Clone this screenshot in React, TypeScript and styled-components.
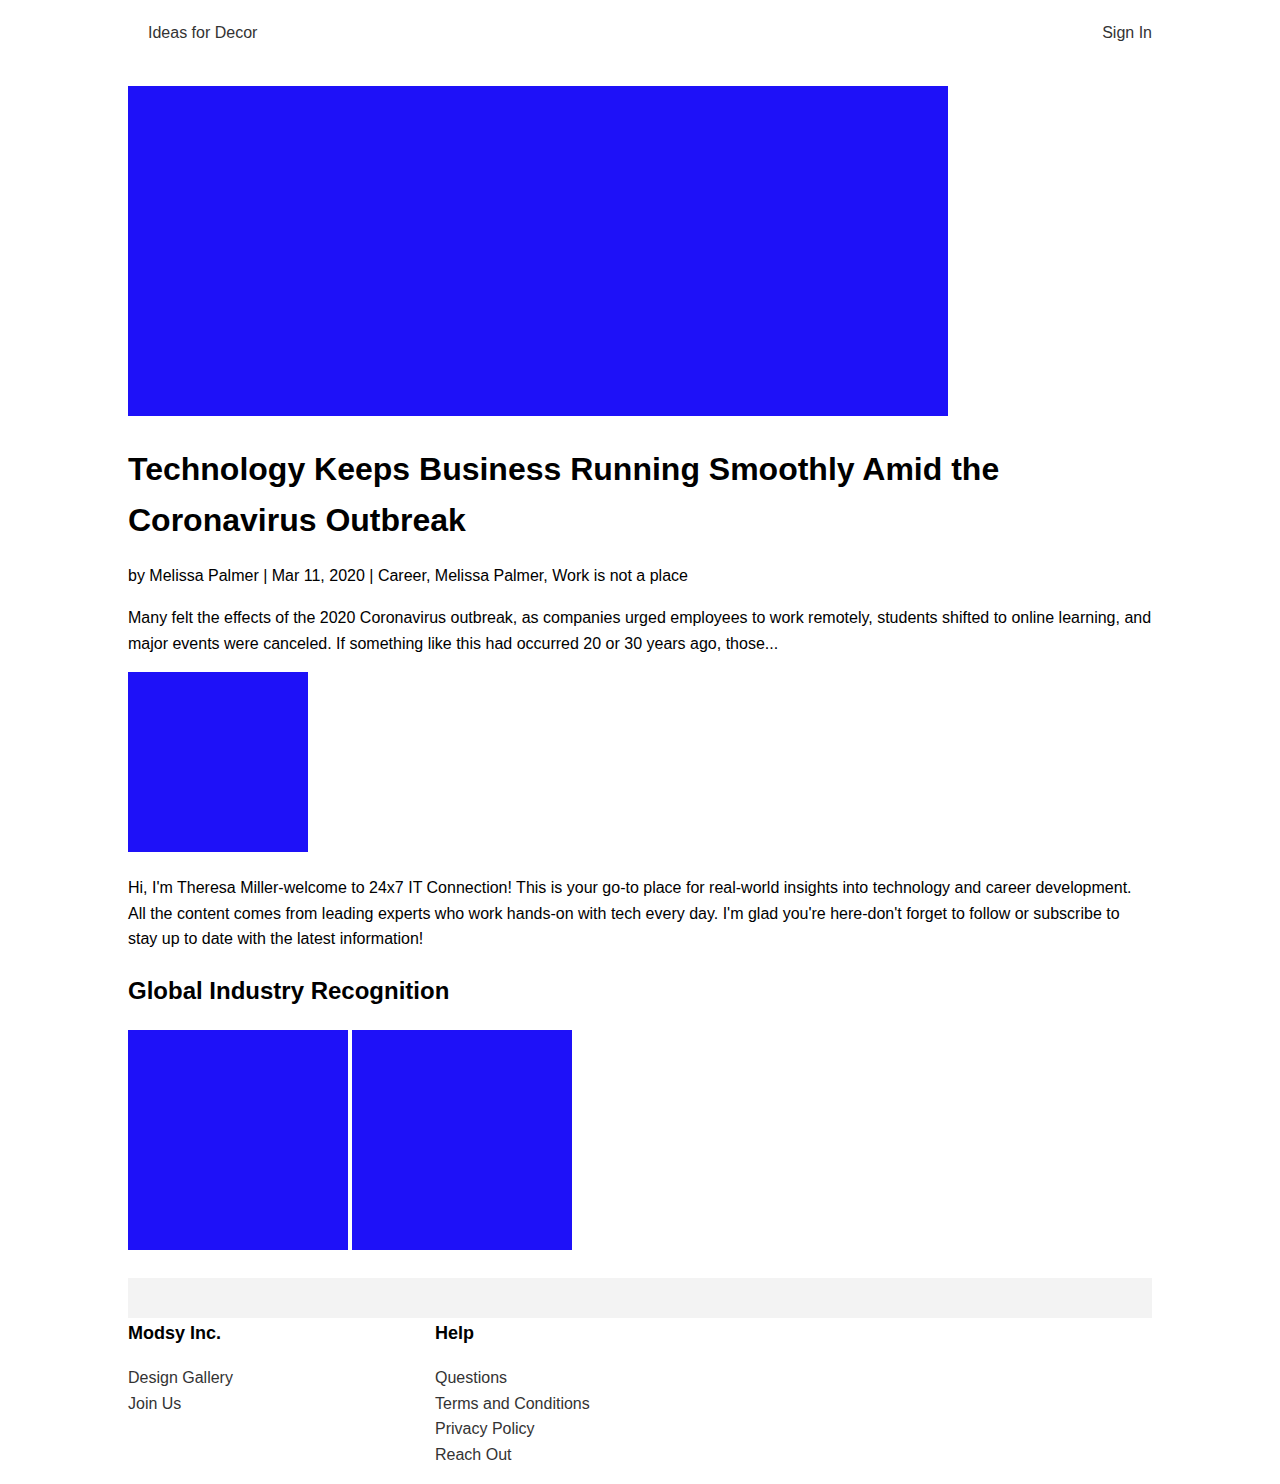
import React from "react";
import styled, { createGlobalStyle } from "styled-components";

const Global = createGlobalStyle`
  html, body { margin: 0; padding: 0; background: #fff; }
  body { font-family: "Liberation Sans", Arial, sans-serif; color: #000; }
  * { box-sizing: border-box; }
`;

const BLUE = "#1e11f8";

const Page = styled.div`
  width: 1024px;
  margin: 0 auto;
`;

const Header = styled.header`
  height: 65px;
  display: flex;
  align-items: center;
  justify-content: space-between;
  padding-left: 20px;
`;

const NavLink = styled.a`
  font-size: 16px;
  color: #333;
  text-decoration: none;
`;

const Block = styled.div<{ $w: number; $h: number }>`
  width: ${(p) => p.$w}px;
  height: ${(p) => p.$h}px;
  background: ${BLUE};
  flex: none;
`;

const Hero = styled(Block)`
  margin-top: 21px;
`;

const Title = styled.h1`
  margin: 28px 0 0;
  font-size: 32px;
  line-height: 51px;
  font-weight: 700;
`;

const Meta = styled.p`
  margin: 18px 0 0;
  font-size: 16px;
  line-height: 24px;
`;

const Para = styled.p<{ $top: number }>`
  margin: ${(p) => p.$top}px 0 0;
  font-size: 16px;
  line-height: 25.6px;
`;

const Avatar = styled(Block)`
  margin-top: 16px;
`;

const SubHeading = styled.h2`
  margin: 21px 0 0;
  font-size: 24px;
  line-height: 36px;
  font-weight: 700;
`;

const Gallery = styled.div`
  display: flex;
  gap: 4px;
  margin-top: 21px;
`;

const Bar = styled.div`
  height: 40px;
  background: #f3f3f3;
  margin-top: 28px;
`;

const Footer = styled.footer`
  display: grid;
  grid-template-columns: 307px 307px;
  padding-bottom: 20px;
`;

const Col = styled.div`
  display: flex;
  flex-direction: column;
`;

const ColTitle = styled.h3`
  margin: 3px 0 0;
  font-size: 18px;
  line-height: 24px;
  font-weight: 700;
`;

const LinkList = styled.ul`
  list-style: none;
  margin: 20px 0 0;
  padding: 0;
`;

const FootLink = styled.li`
  font-size: 16px;
  line-height: 25.7px;
  color: #333;
`;

export default function App() {
  return (
    <>
      <Global />
      <Page>
        <Header>
          <NavLink>Ideas for Decor</NavLink>
          <NavLink>Sign In</NavLink>
        </Header>
        <Hero $w={820} $h={330} />
        <Title>Technology Keeps Business Running Smoothly Amid the Coronavirus Outbreak</Title>
        <Meta>by Melissa Palmer | Mar 11, 2020 | Career, Melissa Palmer, Work is not a place</Meta>
        <Para $top={17}>
          Many felt the effects of the 2020 Coronavirus outbreak, as companies urged employees to work remotely, students shifted to online learning, and major events were canceled. If something like this had occurred 20 or 30 years ago, those...
        </Para>
        <Avatar $w={180} $h={180} />
        <Para $top={23}>
          Hi, I'm Theresa Miller-welcome to 24x7 IT Connection! This is your go-to place for real-world insights into technology and career development. All the content comes from leading experts who work hands-on with tech every day. I'm glad you're here-don't forget to follow or subscribe to stay up to date with the latest information!
        </Para>
        <SubHeading>Global Industry Recognition</SubHeading>
        <Gallery>
          <Block $w={220} $h={220} />
          <Block $w={220} $h={220} />
        </Gallery>
        <Bar />
        <Footer>
          <Col>
            <ColTitle>Modsy Inc.</ColTitle>
            <LinkList>
              <FootLink>Design Gallery</FootLink>
              <FootLink>Join Us</FootLink>
            </LinkList>
          </Col>
          <Col>
            <ColTitle>Help</ColTitle>
            <LinkList>
              <FootLink>Questions</FootLink>
              <FootLink>Terms and Conditions</FootLink>
              <FootLink>Privacy Policy</FootLink>
              <FootLink>Reach Out</FootLink>
            </LinkList>
          </Col>
        </Footer>
      </Page>
    </>
  );
}
